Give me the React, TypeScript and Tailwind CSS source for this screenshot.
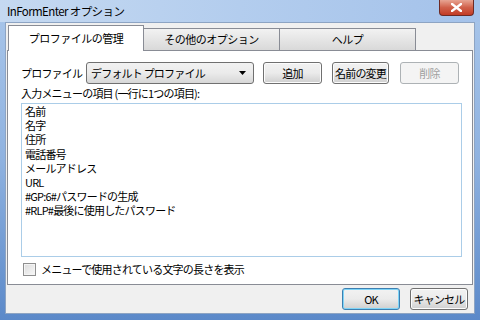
import { useState } from "react";

const jp = { fontFamily: '"Noto Sans CJK JP", "Noto Sans", sans-serif' };

const items = [
  "名前",
  "名字",
  "住所",
  "電話番号",
  "メールアドレス",
  "URL",
  "#GP:6#パスワードの生成",
  "#RLP#最後に使用したパスワード",
];

const tabs = ["プロファイルの管理", "その他のオプション", "ヘルプ"];

function Button({ label, disabled, focused, className }: { label: string; disabled?: boolean; focused?: boolean; className: string }) {
  return (
    <button
      className={`h-[22px] rounded-[3px] border text-[11px] tracking-[-0.8px] leading-none whitespace-nowrap ${className} ${
        disabled
          ? "border-[#adb2b5] bg-[#f4f4f4] text-[#a0a0a0]"
          : focused
          ? "border-[#3c7fb1] bg-gradient-to-b from-[#f2f2f2] via-[#ebebeb] to-[#cfcfcf] text-black shadow-[inset_0_0_0_1px_#7fd4f7]"
          : "border-[#707070] bg-gradient-to-b from-[#f2f2f2] via-[#ebebeb] to-[#cfcfcf] text-black shadow-[inset_0_0_0_1px_#fcfcfc]"
      }`}
    >
      {label}
    </button>
  );
}

export default function App() {
  const [tab] = useState(0);
  return (
    <div
      className="w-[480px] h-[320px] flex flex-col bg-gradient-to-b from-[#a9c6ea] via-[#8fb2e0] to-[#5b89c9] overflow-hidden"
      style={jp}
    >
      {/* Title bar */}
      <div className="h-[22px] flex items-start relative bg-gradient-to-r from-[#c5d9f1] via-[#b3cdee] to-[#a4c2ea]">
        <span className="ml-[7px] mt-[4px] text-[11.5px] tracking-[-0.6px] text-black leading-[14px] whitespace-nowrap">
          InFormEnter オプション
        </span>
        <div className="absolute right-[6px] top-0 w-[35px] h-[16px] rounded-b-[4px] border border-t-0 border-[#6e2a24] bg-gradient-to-b from-[#e7a493] via-[#d0604a] to-[#c23a24] flex items-center justify-center">
          <svg width="11" height="9" viewBox="0 0 11 9">
            <path d="M1 1 L10 8 M10 1 L1 8" stroke="#ffffff" strokeWidth="2.4" strokeLinecap="square" />
          </svg>
        </div>
      </div>

      {/* Client area */}
      <div className="flex-1 mx-[5px] mb-[6px] bg-[#f0f0f0] border border-[#8da4c3] flex flex-col px-[1px]">
        {/* Tabs */}
        <div className="flex items-end h-[26px] pl-[1px] mt-[1px]">
          {tabs.map((t, i) =>
            i === tab ? (
              <div
                key={t}
                className="w-[136px] h-[26px] bg-white border border-b-0 border-[#898c95] text-[11px] tracking-[-0.5px] whitespace-nowrap flex items-center justify-center relative z-10 -mb-[1px]"
              >
                {t}
              </div>
            ) : (
              <div
                key={t}
                className="w-[136px] h-[22px] bg-gradient-to-b from-[#f2f2f2] to-[#d9d9d9] border border-b-0 border-l-0 border-[#898c95] text-[11px] tracking-[-0.5px] whitespace-nowrap flex items-center justify-center"
              >
                {t}
              </div>
            )
          )}
        </div>
        {/* Panel */}
        <div className="h-[235px] bg-white border border-[#898c95] flex flex-col pl-[13px] pr-[10px] text-[11px] tracking-[-0.8px]">
          <div className="flex items-center mt-[11px] h-[22px]">
            <span className="w-[65px] whitespace-nowrap">プロファイル</span>
            <div className="w-[168px] h-[22px] rounded-[3px] border border-[#707070] bg-gradient-to-b from-[#f2f2f2] via-[#ebebeb] to-[#d7d7d7] flex items-center pl-[4px] pr-[7px] whitespace-nowrap">
              <span className="flex-1">デフォルト プロファイル</span>
              <svg width="7" height="4" viewBox="0 0 7 4">
                <path d="M0 0 L7 0 L3.5 4 Z" fill="#000" />
              </svg>
            </div>
            <Button label="追加" className="w-[59px] ml-[9px]" />
            <Button label="名前の変更" className="w-[57px] ml-[10px]" />
            <Button label="削除" disabled className="w-[59px] ml-[11px]" />
          </div>
          <div className="leading-[14px] mt-[2px] whitespace-nowrap">入力メニューの項目 (一行に1つの項目):</div>
          <div className="w-[441px] h-[154px] mt-[3px] border border-[#abcde8] px-[3px]">
            {items.map((it) => (
              <div key={it} className="leading-[14.2px] h-[14.2px] whitespace-nowrap">
                {it}
              </div>
            ))}
          </div>
          <div className="flex items-center mt-[4px] ml-[2px]">
            <div className="w-[13px] h-[13px] border border-[#8f8f8f] bg-gradient-to-br from-[#dcdcdc] to-[#f8f8f8] shadow-[inset_0_0_0_1px_#f4f4f4]" />
            <span className="ml-[5px] whitespace-nowrap">メニューで使用されている文字の長さを表示</span>
          </div>
        </div>
        {/* Footer */}
        <div className="flex-1 flex items-center justify-end pr-[5px] gap-[10px]">
          <Button label="OK" focused className="w-[58px]" />
          <Button label="キャンセル" className="w-[58px]" />
        </div>
      </div>
    </div>
  );
}
